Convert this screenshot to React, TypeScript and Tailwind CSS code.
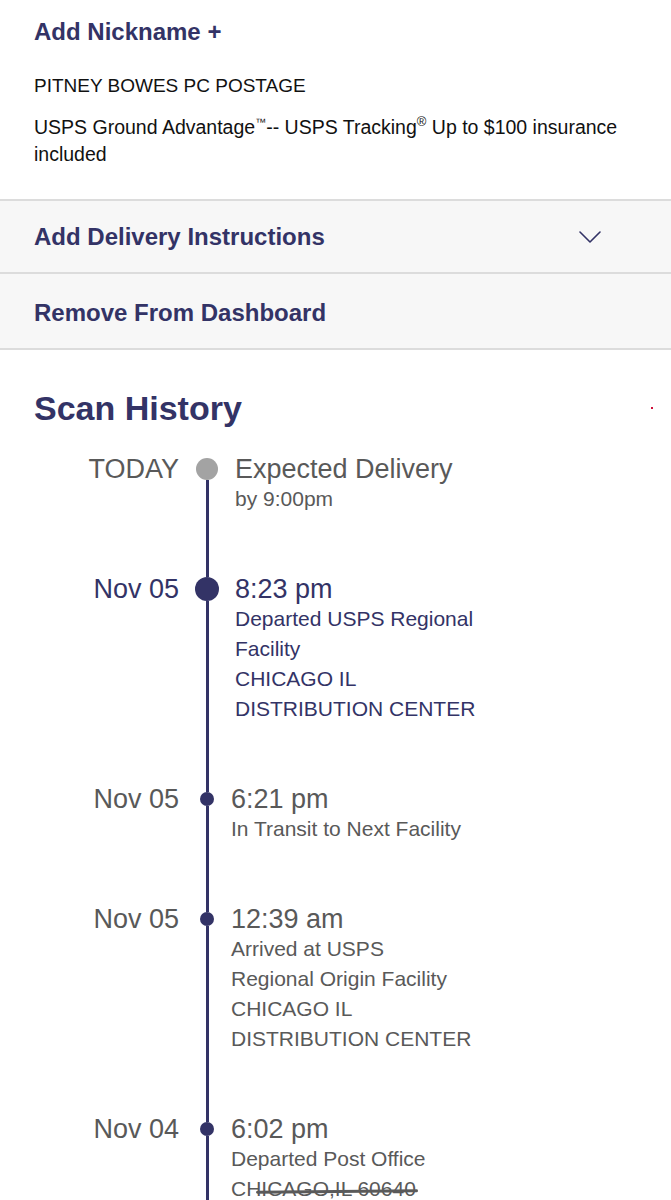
import { ReactNode } from "react";

type ScanEvent = {
  date: string;
  title: string;
  lines: string[];
  kind: "expected" | "current" | "past";
  redactLast?: boolean;
};

const events: ScanEvent[] = [
  {
    date: "TODAY",
    title: "Expected Delivery",
    lines: ["by 9:00pm"],
    kind: "expected",
  },
  {
    date: "Nov 05",
    title: "8:23 pm",
    lines: [
      "Departed USPS Regional",
      "Facility",
      "CHICAGO IL",
      "DISTRIBUTION CENTER",
    ],
    kind: "current",
  },
  {
    date: "Nov 05",
    title: "6:21 pm",
    lines: ["In Transit to Next Facility"],
    kind: "past",
  },
  {
    date: "Nov 05",
    title: "12:39 am",
    lines: [
      "Arrived at USPS",
      "Regional Origin Facility",
      "CHICAGO IL",
      "DISTRIBUTION CENTER",
    ],
    kind: "past",
  },
  {
    date: "Nov 04",
    title: "6:02 pm",
    lines: ["Departed Post Office", "CHICAGO,IL 60640"],
    kind: "past",
    redactLast: true,
  },
];

const ActionRow = ({
  children,
  height,
}: {
  children: ReactNode;
  height: string;
}) => (
  <div
    className={`bg-[#f7f7f7] border-b-2 border-[#dcdcdc] flex items-center justify-between pl-[34px] pr-[70px] ${height}`}
  >
    {children}
  </div>
);

const Dot = ({ kind }: { kind: ScanEvent["kind"] }) => {
  if (kind === "expected") {
    return (
      <>
        <div className="h-[4px]" />
        <div className="w-[22px] h-[22px] rounded-full bg-[#a3a3a3]" />
      </>
    );
  }
  if (kind === "current") {
    return (
      <>
        <div className="h-[3px] w-[3px] bg-[#333366]" />
        <div className="w-[24px] h-[24px] rounded-full bg-[#333366]" />
      </>
    );
  }
  return (
    <>
      <div className="h-[8px] w-[3px] bg-[#333366]" />
      <div className="w-[14px] h-[14px] rounded-full bg-[#333366]" />
    </>
  );
};

const EventRow = ({ event }: { event: ScanEvent }) => {
  const navy = event.kind === "current";
  const color = navy ? "text-[#333366]" : "text-[#595959]";
  return (
    <div className="flex">
      <div
        className={`w-[179px] shrink-0 text-right text-[27px] leading-[30px] ${color}`}
      >
        {event.date}
      </div>
      <div className="w-[56px] shrink-0 flex flex-col items-center">
        <Dot kind={event.kind} />
        <div className="flex-1 w-[3px] bg-[#333366]" />
      </div>
      <div
        className={`pb-[60px] ${color} ${event.kind === "past" ? "-ml-[4px]" : ""}`}
      >
        <div className="text-[27px] leading-[30px]">{event.title}</div>
        {event.lines.map((line, i) => {
          const last = i === event.lines.length - 1;
          if (event.redactLast && last) {
            return (
              <div key={i} className="text-[21px] leading-[30px]">
                <span className="relative">
                  {line}
                  <span className="absolute left-[25px] right-[-2px] top-[13px] h-[3px] bg-[#5a5a5a] rounded-full -rotate-[0.6deg]" />
                </span>
              </div>
            );
          }
          return (
            <div key={i} className="text-[21px] leading-[30px]">
              {line}
            </div>
          );
        })}
      </div>
    </div>
  );
};

export default function App() {
  return (
    <div
      className="w-[671px] bg-white overflow-hidden"
      style={{ fontFamily: '"Liberation Sans", Arial, sans-serif' }}
    >
      <div className="px-[34px] pt-[16px] pb-[31px] border-b-2 border-[#dcdcdc]">
        <div className="text-[24px] leading-[32px] font-bold text-[#333366]">
          Add Nickname +
        </div>
        <div className="mt-[24px] text-[19px] leading-[27px] text-[#111]">
          PITNEY BOWES PC POSTAGE
        </div>
        <div className="mt-[15px] text-[19.5px] leading-[27px] text-[#111]">
          USPS Ground Advantage
          <span className="relative -top-[8px] text-[11px] leading-none">™</span>
          -- USPS Tracking
          <span className="relative -top-[8px] text-[13px] leading-none">®</span>{" "}
          Up to $100 insurance included
        </div>
      </div>

      <ActionRow height="h-[73px]">
        <span className="text-[24px] font-bold text-[#333366]">
          Add Delivery Instructions
        </span>
        <svg width="22" height="12" viewBox="0 0 22 12" fill="none">
          <polyline
            points="1,1 11,11 21,1"
            stroke="#333366"
            strokeWidth="1.6"
            strokeLinecap="round"
            strokeLinejoin="round"
          />
        </svg>
      </ActionRow>
      <ActionRow height="h-[76px] pt-[4px]">
        <span className="text-[24px] font-bold text-[#333366]">
          Remove From Dashboard
        </span>
      </ActionRow>

      <div className="flex items-center justify-between pl-[34px] pr-[18px] mt-[38px] mb-[26px]">
        <h2 className="text-[34px] leading-[40px] font-bold text-[#333366]">
          Scan History
        </h2>
        <span className="w-[2px] h-[2px] bg-[#d0103a]" />
      </div>

      <div>
        {events.map((event, i) => (
          <EventRow key={i} event={event} />
        ))}
      </div>
    </div>
  );
}
